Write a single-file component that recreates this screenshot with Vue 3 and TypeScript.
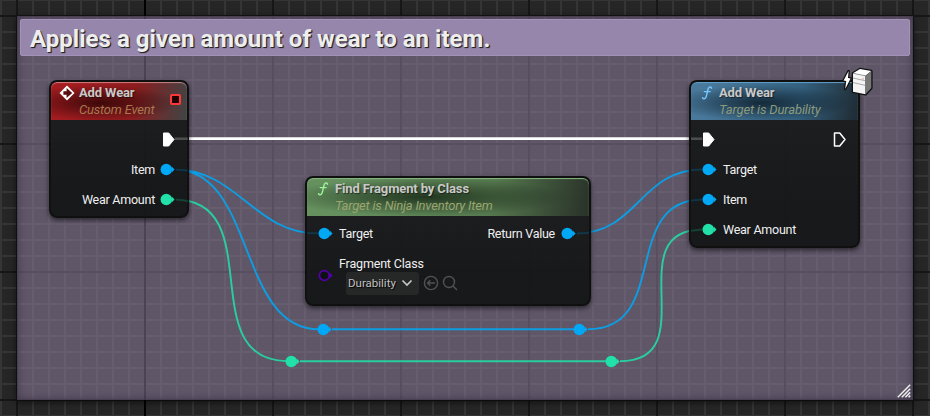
<script setup lang="ts">
interface Wire { d: string; color: string; width: number }
interface Knot { x: number; y: number; color: string }

const blue = '#00a8f5'
const green = '#21e0a8'

const wires: Wire[] = [
  { d: 'M174 138.7 H703', color: '#ffffff', width: 2.8 },
  { d: 'M174 169.5 C238 169.5 254 233.5 318 233.5', color: blue, width: 1.9 },
  { d: 'M174 169.5 C256 169.5 237 329.3 319 329.3', color: blue, width: 1.9 },
  { d: 'M332 329.2 H575', color: blue, width: 1.9 },
  { d: 'M588 329.2 C671 329.2 620 199.5 703 199.5', color: blue, width: 1.9 },
  { d: 'M575 233.5 C639 233.5 639 169.5 703 169.5', color: blue, width: 1.9 },
  { d: 'M174 199.5 C270 199.5 192 361.2 288 361.2', color: green, width: 1.9 },
  { d: 'M300 361.2 H607', color: green, width: 1.9 },
  { d: 'M620 361.2 C706 361.2 617 229.5 703 229.5', color: green, width: 1.9 },
]

// Faint wire ends that show through the node bodies
const stubs: Wire[] = [
  { d: 'M175 138.7 H188 M691 138.7 H702', color: '#ffffff', width: 2.6 },
  { d: 'M176 169.6 L188 170.3 M307 233.2 H318 M577 233.5 L589 232.9 M691 170 L702 169.5 M691 200.6 L702 199.5', color: blue, width: 1.8 },
  { d: 'M176 199.5 L188 201 M691 230.8 L702 229.5', color: green, width: 1.8 },
]

const knots: Knot[] = [
  { x: 317, y: 323, color: blue },
  { x: 573, y: 323, color: blue },
  { x: 285, y: 355, color: green },
  { x: 605, y: 355, color: green },
]
</script>

<template>
  <div class="graph">
    <section class="comment">
      <h1 class="comment-title">Applies a given amount of wear to an item.</h1>
      <svg class="grip" width="14" height="14" viewBox="0 0 14 14">
        <path d="M.8 13.2 13.2.8M4.8 13.2 13.2 4.8M8.4 13.2l4.8-4.8M11.6 13.2l1.6-1.6" />
      </svg>
    </section>

    <svg class="wires" width="930" height="416" viewBox="0 0 930 416">
      <path v-for="(w, i) in wires" :key="i" :d="w.d" :stroke="w.color" :stroke-width="w.width" />
    </svg>

    <svg v-for="(k, i) in knots" :key="i" class="knot pin" :style="{ left: k.x + 'px', top: k.y + 'px', color: k.color }" width="15" height="13" viewBox="0 0 15 13">
      <circle cx="6.3" cy="6.5" r="5.8" /><path d="M11.8 3.5v6l2.7-3z" />
    </svg>

    <article class="node event">
      <header class="head">
        <svg class="head-icon event-icon" width="16" height="16" viewBox="0 0 16 16">
          <path d="M8 .5 15.5 8 8 15.5.5 8z" fill="#fff" />
          <path d="M7.6 2.9 13.2 8l-5.6 5.1V9.8H4.4V6.2h3.2z" fill="#5a0c10" />
        </svg>
        <div class="titles"><b>Add Wear</b><i>Custom Event</i></div>
        <span class="delegate"></span>
      </header>
      <div class="body">
        <div class="row out"><svg class="exec" width="13" height="15" viewBox="0 0 13 15"><path d="M1.5 1h5.2l5.3 6.5L6.7 14H1.5z" /></svg></div>
        <div class="row out"><span>Item</span><svg class="pin blue" width="15" height="13" viewBox="0 0 15 13"><circle cx="6.3" cy="6.5" r="5.8" /><path d="M11.8 3.5v6l2.7-3z" /></svg></div>
        <div class="row out"><span>Wear Amount</span><svg class="pin green" width="15" height="13" viewBox="0 0 15 13"><circle cx="6.3" cy="6.5" r="5.8" /><path d="M11.8 3.5v6l2.7-3z" /></svg></div>
      </div>
    </article>

    <article class="node find">
      <header class="head">
        <svg class="head-icon" width="14" height="16" viewBox="0 0 14 16"><path d="M11.5 3.2C11 1.2 8.7 1.6 8 4.3L6.4 11c-.6 2.7-2.6 3.5-3.9 1.8M4.2 6.6h6" /></svg>
        <div class="titles"><b>Find Fragment by Class</b><i>Target is Ninja Inventory Item</i></div>
      </header>
      <div class="body">
        <div class="row">
          <svg class="pin blue" width="15" height="13" viewBox="0 0 15 13"><circle cx="6.3" cy="6.5" r="5.8" /><path d="M11.8 3.5v6l2.7-3z" /></svg>
          <span>Target</span>
          <span class="return">Return Value</span>
          <svg class="pin blue" width="15" height="13" viewBox="0 0 15 13"><circle cx="6.3" cy="6.5" r="5.8" /><path d="M11.8 3.5v6l2.7-3z" /></svg>
        </div>
        <div class="class-row">
          <svg class="pin class-pin" width="15" height="13" viewBox="0 0 15 13"><circle cx="6.3" cy="6.5" r="4.9" /><path d="M11.8 3.5v6l2.7-3z" /></svg>
          <div class="field">
            <span>Fragment Class</span>
            <div class="controls">
              <div class="select">Durability<svg width="12" height="8" viewBox="0 0 12 8"><path d="m1.5 1.5 4.5 4.5 4.5-4.5" /></svg></div>
              <svg class="tool" width="16" height="16" viewBox="0 0 16 16"><circle cx="8" cy="8" r="6.6" /><path d="M12 8H4.5M7.3 5.2 4.5 8l2.8 2.8" /></svg>
              <svg class="tool" width="16" height="16" viewBox="0 0 16 16"><circle cx="7" cy="7" r="5.5" /><path d="m11 11 4 4" /></svg>
            </div>
          </div>
        </div>
      </div>
    </article>

    <article class="node call">
      <header class="head">
        <svg class="head-icon" width="14" height="16" viewBox="0 0 14 16"><path d="M11.5 3.2C11 1.2 8.7 1.6 8 4.3L6.4 11c-.6 2.7-2.6 3.5-3.9 1.8M4.2 6.6h6" /></svg>
        <div class="titles"><b>Add Wear</b><i>Target is Durability</i></div>
      </header>
      <div class="body">
        <div class="row">
          <svg class="exec" width="13" height="15" viewBox="0 0 13 15"><path d="M1.5 1h5.2l5.3 6.5L6.7 14H1.5z" /></svg>
          <svg class="exec hollow" width="13" height="15" viewBox="0 0 13 15"><path d="M1.5 1h5.2l5.3 6.5L6.7 14H1.5z" /></svg>
        </div>
        <div class="row"><svg class="pin blue" width="15" height="13" viewBox="0 0 15 13"><circle cx="6.3" cy="6.5" r="5.8" /><path d="M11.8 3.5v6l2.7-3z" /></svg><span>Target</span></div>
        <div class="row"><svg class="pin blue" width="15" height="13" viewBox="0 0 15 13"><circle cx="6.3" cy="6.5" r="5.8" /><path d="M11.8 3.5v6l2.7-3z" /></svg><span>Item</span></div>
        <div class="row"><svg class="pin green" width="15" height="13" viewBox="0 0 15 13"><circle cx="6.3" cy="6.5" r="5.8" /><path d="M11.8 3.5v6l2.7-3z" /></svg><span>Wear Amount</span></div>
      </div>
      <svg class="server" width="32" height="32" viewBox="0 0 32 32">
        <g stroke="#111" stroke-width="2.6" stroke-linejoin="round">
          <path d="M8.6 6 3.6 15.6l2.6.5L5.2 24l5.4-10.6-2.6-.4z" />
          <path d="M13 8.3 20 4l11.3 2v17l-5.8 6.3L13 26.7z" />
        </g>
        <path d="M8.6 6 3.6 15.6l2.6.5L5.2 24l5.4-10.6-2.6-.4z" fill="#fff" />
        <path d="M13 8.3 20 4l11.3 2-5.8 4.8z" fill="#fff" />
        <path d="M13 8.3l12.5 2.5v18.5L13 26.7z" fill="#f4f4f4" />
        <path d="m31.3 6-5.8 4.8v18.5l5.8-6.3z" fill="#777" />
        <path d="m13 13 12.5 2.8M13 17.6l12.5 2.8M13 8.3l12.5 2.5" fill="none" stroke="#888" stroke-width=".7" />
        <path d="M23 12.8v2" fill="none" stroke="#d09090" stroke-width=".8" />
      </svg>
    </article>

    <svg class="stubs" width="930" height="416" viewBox="0 0 930 416">
      <path v-for="(s, i) in stubs" :key="i" :d="s.d" :stroke="s.color" :stroke-width="s.width" />
    </svg>
  </div>
</template>

<style>
body { margin: 0; background: #262626; }
</style>

<style scoped>
.graph {
  position: relative;
  width: 930px;
  height: 416px;
  overflow: hidden;
  font-family: Roboto, "Liberation Sans", sans-serif;
  font-size: 12.5px;
  letter-spacing: -.25px;
  color: #f0f0f0;
  background:
    linear-gradient(#000, #000) 144px 0 / 2px 100% no-repeat,
    linear-gradient(90deg, #161616 2px, transparent 2px) 16px 0 / 128px 100%,
    linear-gradient(#161616 2px, transparent 2px) 0 15px / 100% 128px,
    linear-gradient(90deg, #353535 2px, transparent 2px) 0 0 / 16px 100%,
    linear-gradient(#353535 2px, transparent 2px) 0 15px / 100% 16px,
    #262626;
}
.comment {
  position: absolute;
  left: 17px;
  top: 16px;
  width: 896px;
  height: 384px;
  box-sizing: border-box;
  padding: 3px;
  background: rgba(151, 134, 170, .5);
  box-shadow: inset 0 0 9px rgba(30, 22, 40, .55), 0 2px 7px rgba(0, 0, 0, .65);
}
.comment-title {
  box-sizing: border-box;
  height: 37px;
  margin: 0;
  padding: 0 9px;
  border: 1px solid #a292b8;
  border-radius: 2px;
  background: #9686ab;
  color: #eee;
  font-size: 24px;
  letter-spacing: .03px;
  line-height: 38px;
  font-weight: 700;
  text-shadow: 1px 1px 1px #222, 1px 1px 0 #444;
}
.grip { position: absolute; right: 2px; bottom: 2px; fill: none; stroke: #eee; stroke-width: 1.5; }
.wires, .stubs { position: absolute; left: 0; top: 0; fill: none; }
.stubs { opacity: .17; pointer-events: none; }
.wires path { opacity: .87; }
.wires path:first-child { opacity: 1; }
.knot { position: absolute; }
.pin { display: block; flex: none; fill: currentColor; }
.blue { color: #00a8f5; }
.green { color: #21e0a8; }
.node {
  position: absolute;
  box-sizing: border-box;
  border: 2px solid #101010;
  border-radius: 8px;
  background: linear-gradient(rgba(26, 28, 28, .93), rgba(18, 20, 21, .93) 75%);
  box-shadow: 0 2px 5px rgba(0, 0, 0, .6);
}
.event { left: 49px; top: 80px; width: 140px; height: 138px; }
.find { left: 305px; top: 176px; width: 286px; height: 130px; }
.call { left: 689px; top: 80px; width: 171px; height: 168px; }
.head {
  display: flex;
  box-sizing: border-box;
  height: 38px;
  padding: 2px 6px 0 8px;
  border-radius: 6px 6px 0 0;
}
.event .head {
  background: radial-gradient(ellipse 80px 18px at 36% 55%, rgba(25, 0, 0, .7), transparent), linear-gradient(100deg, #a31c20 10%, #8c1c1e 60%, #434343 98%);
  box-shadow: inset 0 1px 1px rgba(255, 190, 190, .6);
}
.find .head {
  background: radial-gradient(ellipse 145px 19px at 42% 50%, rgba(15, 30, 15, .75), transparent), linear-gradient(100deg, #66915f 10%, #56794f 65%, #2b352a 98%);
  box-shadow: inset 0 1px 1px #88b981;
}
.call .head {
  background: radial-gradient(ellipse 90px 18px at 42% 55%, rgba(7, 20, 30, .75), transparent), linear-gradient(100deg, #48789a 10%, #34607e 65%, #202d36 98%);
  box-shadow: inset 0 1px 1px #62a0cc;
}
.head-icon { flex: none; fill: none; stroke: #9af29a; stroke-width: 1.4; stroke-linecap: round; margin: 1px 5px 0 1px; }
.call .head-icon { stroke: #75c5ff; }
.event-icon { stroke: none; margin: 1px 4px 0 0; }
.titles { display: flex; flex-direction: column; line-height: 17px; white-space: nowrap; }
.titles b { color: #c9c9c9; font-size: 13px; letter-spacing: -.13px; line-height: 17px; text-shadow: 1px 1px 1px rgba(0, 0, 0, .5); }
.titles i { color: #a0925f; font-size: 13px; letter-spacing: -.21px; }
.event .titles i { color: #a67a50; }
.call .titles i { color: #8b9a7c; letter-spacing: -.13px; }
.find .titles i { color: #9ba570; }
.delegate { box-sizing: border-box; width: 11px; height: 11px; margin: 10px 0 0 auto; border: 2px solid #ff3939; border-radius: 2px; background: #210000; }
.body { display: flex; flex-direction: column; padding: 4px 13px 0 11px; }
.event .body { padding-right: 12px; }
.find .body { padding-top: 2px; }
.row { display: flex; align-items: center; height: 30px; gap: 6px; white-space: nowrap; }
.row.out { justify-content: flex-end; gap: 5px; }
.exec { flex: none; fill: #fff; stroke: #fff; stroke-width: 1; stroke-linejoin: round; }
.hollow { fill: none; stroke-width: 1.5; margin-left: auto; margin-right: -1px; }
.return { margin-left: auto; }
.class-row { display: flex; gap: 6px; }
.class-pin { color: #5200a8; margin-top: 21px; }
.class-pin circle { fill: #101014; stroke: currentColor; stroke-width: 1.8; }
.field { display: flex; flex-direction: column; line-height: 16px; padding-top: 8px; letter-spacing: -.17px; }
.controls { display: flex; align-items: center; height: 22px; padding-left: 7px; gap: 3px; }
.select { display: flex; box-sizing: border-box; align-items: center; justify-content: space-between; width: 73px; height: 23px; padding: 0 6px 0 2px; margin-right: 1px; border-radius: 3px; background: #262828; color: #c0c0c0; font-size: 11.5px; letter-spacing: 0; text-shadow: 1px 1px 1px #000; }
.select svg { fill: none; stroke: #c5c5c5; stroke-width: 1.7; }
.tool { fill: none; stroke: #505252; stroke-width: 1.4; }
.server { position: absolute; right: -13.5px; top: -17px; overflow: visible; }
</style>
